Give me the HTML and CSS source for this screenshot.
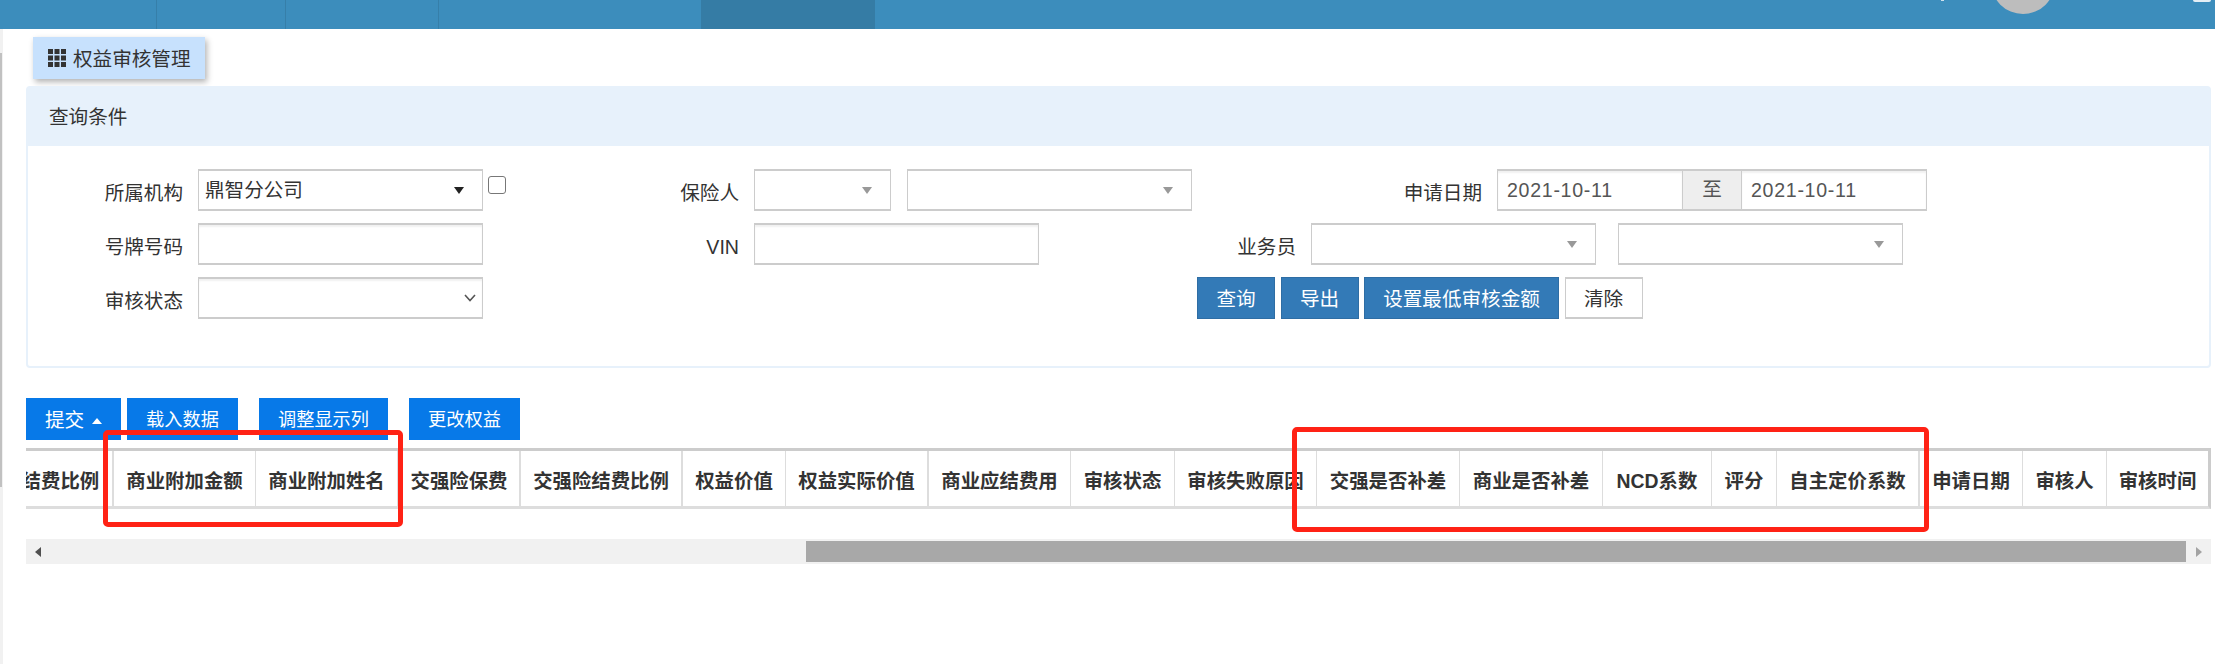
FILE: index.html
```html
<!DOCTYPE html>
<html lang="zh-CN">

<head>
    <meta charset="UTF-8">
    <title>权益审核管理</title>
    <link rel="stylesheet" href="styles.css">
</head>

<body>
    <div class="pageScroll"><div class="pageThumb"></div></div>

    <!-- 顶部导航 -->
    <div class="topbar">
        <div class="navItem w157"></div>
        <div class="navItem w129"></div>
        <div class="navItem w153"></div>
        <div class="navItem w263 noLine"></div>
        <div class="navItem w174 noLine active"></div>
        <div class="caretMark"></div>
        <div class="avatar"></div>
        <div class="userMark"></div>
    </div>

    <div class="tabTitle">
        <svg class="gridIcon" viewBox="0 0 18 18" width="18" height="18">
            <path d="M0 0h5v5H0zM6.5 0h5v5h-5zM13 0h5v5h-5zM0 6.5h5v5H0zM6.5 6.5h5v5h-5zM13 6.5h5v5h-5zM0 13h5v5H0zM6.5 13h5v5h-5zM13 13h5v5h-5z" fill="#333"/>
        </svg>
        <span class="tabText">权益审核管理</span>
    </div>

    <!-- 查询条件 -->
    <div class="panel">
        <div class="panelHead">查询条件</div>
        <div class="panelBody">
            <div class="row">
                <label class="lbl w155">所属机构</label>
                <div class="ctrl w285 textCtrl">鼎智分公司<i class="tri dark"></i></div>
                <div class="check"></div>
                <label class="lbl w233">保险人</label>
                <div class="ctrl w137"><i class="tri"></i></div>
                <div class="ctrl w285 gap16"><i class="tri"></i></div>
                <label class="lbl w290">申请日期</label>
                <div class="dateGroup">
                    <div class="dateInput w186">2021-10-11</div>
                    <div class="dateAddon">至</div>
                    <div class="dateInput w186">2021-10-11</div>
                </div>
            </div>
            <div class="row">
                <label class="lbl w155">号牌号码</label>
                <div class="ctrl w285 inset"></div>
                <label class="lbl w256">VIN</label>
                <div class="ctrl w285 inset"></div>
                <label class="lbl w257">业务员</label>
                <div class="ctrl w285"><i class="tri"></i></div>
                <div class="ctrl w285 gap22"><i class="tri"></i></div>
            </div>
            <div class="row">
                <label class="lbl w155">审核状态</label>
                <div class="ctrl w285 inset">
                    <svg class="chevron" viewBox="0 0 12 8" width="12" height="8">
                        <path d="M1 1l5 5.5L11 1" fill="none" stroke="#555" stroke-width="1.6"/>
                    </svg>
                </div>
                <div class="btnGroup">
                    <button class="btn primary w78">查询</button>
                    <button class="btn primary w78">导出</button>
                    <button class="btn primary w195">设置最低审核金额</button>
                    <button class="btn plain w78">清除</button>
                </div>
            </div>
        </div>
    </div>

    <div class="toolbar">
        <button class="toolBtn big w95">提交<i class="caretUp"></i></button>
        <button class="toolBtn w111">载入数据</button>
        <button class="toolBtn w129 ml21">调整显示列</button>
        <button class="toolBtn w111 ml21">更改权益</button>
    </div>

    <!-- 表格超出部分隐藏，靠右对齐 -->
    <div class="tableWrap">
        <table class="grid">
            <colgroup>
                <col class="c144"><col class="c142"><col class="c143"><col class="c122"><col class="c162">
                <col class="c103"><col class="c143"><col class="c142"><col class="c104"><col class="c142">
                <col class="c143"><col class="c143"><col class="c109"><col class="c65"><col class="c143">
                <col class="c103"><col class="c84"><col class="c101">
            </colgroup>
            <tr>
                <th class="thick">商业结费比例</th>
                <th>商业附加金额</th>
                <th class="thick">商业附加姓名</th>
                <th class="thick">交强险保费</th>
                <th class="thick">交强险结费比例</th>
                <th>权益价值</th>
                <th class="thick">权益实际价值</th>
                <th>商业应结费用</th>
                <th>审核状态</th>
                <th>审核失败原因</th>
                <th>交强是否补差</th>
                <th>商业是否补差</th>
                <th>NCD系数</th>
                <th>评分</th>
                <th class="thick">自主定价系数</th>
                <th>申请日期</th>
                <th>审核人</th>
                <th>审核时间</th>
            </tr>
        </table>
    </div>

    <div class="hScroll">
        <div class="hLeft"><i class="arrowL"></i></div>
        <div class="hThumb"></div>
        <div class="hRight"><i class="arrowR"></i></div>
    </div>

    <!-- 截图上的红框标注 -->
    <div class="mark markA"></div>
    <div class="mark markB"></div>
</body>

</html>
```

FILE: styles.css
```css
* {
    margin: 0;
    padding: 0;
    box-sizing: border-box;
}

html,
body {
    height: 100%;
    overflow: hidden;
}

body {
    position: relative;
    background: #fff;
    color: #333;
    font: 19.6px "Liberation Sans", "Noto Sans CJK SC", sans-serif;
}

.pageScroll {
    position: absolute;
    left: 0;
    top: 29px;
    bottom: 0;
    width: 3px;
    background: #f1f1f1;
}

.pageThumb {
    width: 2px;
    height: 434px;
    margin-top: 24px;
    background: #c1c1c1;
}

/* 顶部导航 */
.topbar {
    display: flex;
    height: 29px;
    overflow: hidden;
    background: #3c8dbc;
}

.navItem {
    height: 29px;
    border-right: 1px solid #367fa9;
}

.navItem.noLine {
    border-right: none;
}

.navItem.active {
    background: #357ca5;
}

.w157 { width: 157px; }
.w129 { width: 129px; }
.w153 { width: 153px; }
.w263 { width: 262px; }
.w174 { width: 174px; }

.caretMark {
    width: 3px;
    height: 1px;
    margin-left: 1066px;
    background: #cfe2ee;
}

.avatar {
    flex: none;
    width: 64px;
    height: 64px;
    margin-top: -50px;
    margin-left: 47px;
    border-radius: 50%;
    background: radial-gradient(circle, #bdbdbd 80%, #e2e2e2 97%);
}

.userMark {
    flex: none;
    width: 18px;
    height: 2px;
    margin-left: 138px;
    border-radius: 0 0 9px 9px;
    background: #e4eef5;
}

.tabTitle {
    display: flex;
    align-items: center;
    width: 172px;
    height: 42px;
    margin: 8px 0 0 33px;
    padding-left: 15px;
    background: #c7e1fd;
    box-shadow: 2px 3px 6px rgba(0, 0, 0, 0.3);
}

.gridIcon {
    margin-right: 7px;
}

.tabText {
    padding-bottom: 2px;
}

/* 查询条件 */
.panel {
    width: 2185px;
    height: 282px;
    margin: 7px 0 0 26px;
    border: 2px solid #e7f1fb;
    border-radius: 4px;
}

.panelHead {
    height: 58px;
    padding-left: 21px;
    line-height: 58px;
    background: #e7f1fb;
}

.panelBody {
    display: flex;
    flex-direction: column;
    gap: 12px;
    padding-top: 23px;
}

.row {
    display: flex;
    height: 42px;
}

.lbl {
    flex: none;
    margin-right: 15px;
    padding-top: 3px;
    line-height: 42px;
    text-align: right;
}

.w155 { width: 155px; }
.w233 { width: 233px; }
.w256 { width: 256px; }
.w257 { width: 257px; }
.w290 { width: 290px; }
.w285 { width: 285px; }
.w137 { width: 137px; }
.w186 { width: 186px; }
.gap16 { margin-left: 16px; }
.gap22 { margin-left: 22px; }

.ctrl {
    position: relative;
    flex: none;
    height: 42px;
    border: 1px solid #ccc;
    border-width: 2px 1px;
    background: #fff;
}

.inset {
    box-shadow: inset 0 2px 2px rgba(0, 0, 0, 0.06);
}

.textCtrl {
    padding-left: 6px;
    line-height: 39px;
}

.tri {
    position: absolute;
    right: 18px;
    top: 16px;
    border-left: 5.5px solid transparent;
    border-right: 5.5px solid transparent;
    border-top: 7px solid #999;
}

.tri.dark {
    right: 18px;
    border-top-color: #222;
}

.chevron {
    position: absolute;
    right: 6px;
    top: 15px;
}

.check {
    flex: none;
    width: 18px;
    height: 18px;
    margin: 7px 0 0 5px;
    border: 1.5px solid #777;
    border-radius: 3px;
}

.dateGroup {
    display: flex;
    width: 430px;
    height: 42px;
}

.dateInput {
    height: 42px;
    padding-left: 9px;
    border: 1px solid #ccc;
    border-width: 2px 1px;
    color: #555;
    line-height: 39px;
    letter-spacing: 0.7px;
    box-shadow: inset 0 2px 2px rgba(0, 0, 0, 0.06);
}

.dateAddon {
    width: 58px;
    height: 42px;
    border-top: 2px solid #ccc;
    border-bottom: 2px solid #ccc;
    background: #eee;
    color: #555;
    line-height: 36px;
    text-align: center;
}

.btnGroup {
    display: flex;
    gap: 5.5px;
    margin-left: 714px;
}

.btn {
    height: 42px;
    padding-bottom: 2px;
    font: inherit;
    border: 1px solid #2e6da4;
}

.btn.primary {
    background: #337ab7;
    color: #fff;
}

.btn.plain {
    border: 1px solid #ccc;
    border-width: 2px 1px;
    background: #fff;
    color: #333;
}

.w78 { width: 78px; }
.w195 { width: 195px; }

/* 工具栏 */
.toolbar {
    display: flex;
    gap: 6px;
    height: 42px;
    margin: 30px 0 0 26px;
}

.toolBtn {
    height: 42px;
    padding-bottom: 2px;
    border: none;
    background: #0779e8;
    color: #fff;
    font: 18.2px "Liberation Sans", "Noto Sans CJK SC", sans-serif;
}

.toolBtn.big {
    font-size: 19.6px;
}

.w95 { width: 95px; }
.w111 { width: 111px; }
.toolBtn.w129 { width: 129px; }
.ml21 { margin-left: 15px; }

.caretUp {
    display: inline-block;
    margin-left: 8px;
    vertical-align: 3px;
    border-left: 5px solid transparent;
    border-right: 5px solid transparent;
    border-bottom: 6px solid #fff;
}

/* 表格 */
.tableWrap {
    display: flex;
    justify-content: flex-end;
    width: 2185px;
    margin: 8px 0 0 26px;
    overflow: hidden;
}

.grid {
    flex: none;
    table-layout: fixed;
    width: 2241px;
    border-collapse: separate;
    border-spacing: 0;
    border-top: 3px solid #ccc;
    border-bottom: 3px solid #ddd;
    border-right: 3px solid #ccc;
}

.grid th {
    height: 55px;
    padding-top: 2px;
    border-right: 1px solid #ddd;
    color: #333;
    font-size: 19.4px;
    font-weight: bold;
    white-space: nowrap;
    overflow: hidden;
}

.grid th:last-child {
    border-right: none;
}

.grid th.thick {
    border-right: 2px solid #ddd;
}

.c144 { width: 144px; }
.c142 { width: 142px; }
.c143 { width: 143px; }
.c122 { width: 122px; }
.c162 { width: 162px; }
.c103 { width: 103px; }
.c104 { width: 104px; }
.c109 { width: 109px; }
.c65 { width: 65px; }
.c84 { width: 84px; }
.c101 { width: 101px; }

/* 横向滚动条 */
.hScroll {
    display: flex;
    width: 2185px;
    height: 25px;
    margin: 30px 0 0 26px;
    padding: 2px 0;
    background: #f1f1f1;
}

.hLeft {
    display: flex;
    align-items: center;
    width: 780px;
    padding-left: 9px;
}

.hThumb {
    width: 1380px;
    background: #a8a8a8;
}

.hRight {
    display: flex;
    align-items: center;
    width: 25px;
    padding-left: 10px;
}

.arrowL {
    border-top: 5.5px solid transparent;
    border-bottom: 5.5px solid transparent;
    border-right: 6px solid #505050;
}

.arrowR {
    border-top: 5.5px solid transparent;
    border-bottom: 5.5px solid transparent;
    border-left: 6px solid #a3a3a3;
}

/* 红框标注 */
.mark {
    position: absolute;
    border: 5px solid #ff2215;
    border-radius: 5px;
}

.markA {
    left: 103px;
    top: 430px;
    width: 300px;
    height: 97px;
}

.markB {
    left: 1292px;
    top: 427px;
    width: 637px;
    height: 105px;
}
```
